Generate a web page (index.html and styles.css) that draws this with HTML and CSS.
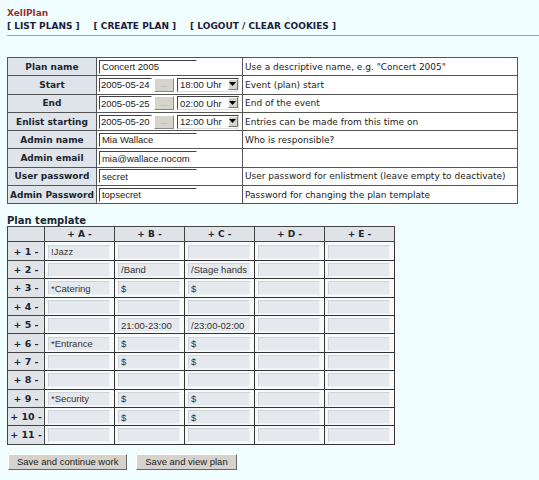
FILE: index.html
```html
<!DOCTYPE html>
<html lang="en">
<head>
    <meta charset="UTF-8">
    <title>XellPlan - Create plan</title>
    <link rel="stylesheet" href="styles.css">
</head>
<body>

<div class="title">XellPlan</div>
<div class="nav">
    <a href="#">[ LIST PLANS ]</a>
    <a href="#">[ CREATE PLAN ]</a>
    <a href="#">[ LOGOUT / CLEAR COOKIES ]</a>
</div>

<form>
<table class="props">
    <tr>
        <th>Plan name</th>
        <td><input type="text" class="txt" value="Concert 2005"></td>
        <td class="desc">Use a descriptive name, e.g. "Concert 2005"</td>
    </tr>
    <tr>
        <th>Start</th>
        <td>
            <input type="text" class="date" value="2005-05-24"><button type="button" class="dots">...</button><span class="sel"><select><option>18:00 Uhr</option></select><span class="arrow"><svg width="7" height="4" viewBox="0 0 7 4"><path d="M0 0h7L3.5 4z" fill="#000"/></svg></span></span>
        </td>
        <td class="desc">Event (plan) start</td>
    </tr>
    <tr>
        <th>End</th>
        <td>
            <input type="text" class="date" value="2005-05-25"><button type="button" class="dots">...</button><span class="sel"><select><option>02:00 Uhr</option></select><span class="arrow"><svg width="7" height="4" viewBox="0 0 7 4"><path d="M0 0h7L3.5 4z" fill="#000"/></svg></span></span>
        </td>
        <td class="desc">End of the event</td>
    </tr>
    <tr>
        <th>Enlist starting</th>
        <td>
            <input type="text" class="date" value="2005-05-20"><button type="button" class="dots">...</button><span class="sel"><select><option>12:00 Uhr</option></select><span class="arrow"><svg width="7" height="4" viewBox="0 0 7 4"><path d="M0 0h7L3.5 4z" fill="#000"/></svg></span></span>
        </td>
        <td class="desc">Entries can be made from this time on</td>
    </tr>
    <tr>
        <th>Admin name</th>
        <td><input type="text" class="txt" value="Mia Wallace"></td>
        <td class="desc">Who is responsible?</td>
    </tr>
    <tr>
        <th>Admin email</th>
        <td><input type="text" class="txt" value="mia@wallace.nocom"></td>
        <td class="desc"></td>
    </tr>
    <tr>
        <th>User password</th>
        <td><input type="text" class="txt" value="secret"></td>
        <td class="desc">User password for enlistment (leave empty to deactivate)</td>
    </tr>
    <tr>
        <th>Admin Password</th>
        <td><input type="text" class="txt" value="topsecret"></td>
        <td class="desc">Password for changing the plan template</td>
    </tr>
</table>

<h2>Plan template</h2>
<table class="grid" id="grid"></table>

<div class="buttons">
    <button type="button" class="btn">Save and continue work</button>
    <button type="button" class="btn">Save and view plan</button>
</div>
</form>

<script>
    // Template cells, row by row (columns A..E)
    const cells = [
        ['!Jazz', '', '', '', ''],
        ['', '/Band', '/Stage hands', '', ''],
        ['*Catering', '$', '$', '', ''],
        ['', '', '', '', ''],
        ['', '21:00-23:00', '/23:00-02:00', '', ''],
        ['*Entrance', '$', '$', '', ''],
        ['', '$', '$', '', ''],
        ['', '', '', '', ''],
        ['*Security', '$', '$', '', ''],
        ['', '$', '$', '', ''],
        ['', '', '', '', '']
    ];
    const cols = ['A', 'B', 'C', 'D', 'E'];

    let html = '<tr><th class="corner"></th>';
    cols.forEach(c => { html += `<th>+ ${c} -</th>`; });
    html += '</tr>';
    cells.forEach((row, i) => {
        html += `<tr><th class="rowhead">+ ${i + 1} -</th>`;
        row.forEach(v => { html += `<td><input type="text" value="${v}"></td>`; });
        html += '</tr>';
    });
    document.getElementById('grid').innerHTML = html;
</script>

</body>
</html>
```

FILE: styles.css
```css
body {
    font-family: "DejaVu Sans", Verdana, sans-serif;
    font-size: 9px;
    background-color: #f0feff;
    color: #222;
    margin: 0;
    padding: 8px 0 0 7px;
}
.title {
    color: #993333;
    font-weight: bold;
    font-size: 9px;
    line-height: 11px;
}
.nav {
    border-bottom: 1px solid #9a9ea2;
    padding: 2px 0 3px;
    line-height: 11px;
}
.nav a {
    color: #1c1c3a;
    font-weight: bold;
    text-decoration: none;
    margin-right: 11px;
}
/* Plan properties */
.props {
    border-collapse: collapse;
    margin-top: 21px;
    width: 511px;
    border: 1px solid #666;
}
.props th, .props td {
    border: 1px solid #555;
    height: 17.3px;
    padding: 0 2px;
}
.props th {
    width: 83px;
    background-color: #dfe4ea;
    color: #1c2430;
    font-weight: bold;
    white-space: nowrap;
    text-align: center;
}
.props td {
    background-color: #fff;
    white-space: nowrap;
}
.props td.desc {
    width: 270px;
    color: #222;
}
input, select, .btn {
    font-family: "Liberation Sans", Arial, sans-serif;
    font-size: 9.5px;
    color: #222;
    margin: 0;
    box-sizing: border-box;
}
.txt, .date {
    height: 14px;
    padding: 0 2px;
    border: 1px solid #fff;
    border-top-color: #444;
    border-left-color: #444;
    background: #fff;
    vertical-align: middle;
}
.txt {
    width: 98px;
}
.date {
    width: 53px;
    padding: 0 0 0 1px;
}
.dots {
    width: 20px;
    height: 14px;
    margin: 0 3px 0 2px;
    padding: 0;
    font-size: 8px;
    color: #999;
    background: #d6d3cc;
    border: 1px solid;
    border-color: #fff #888 #888 #fff;
    vertical-align: middle;
}
.sel {
    position: relative;
    display: inline-block;
    vertical-align: middle;
}
.sel select {
    display: block;
    width: 62px;
    height: 14px;
    padding: 0 0 0 2px;
    background: #fff;
    border: 1px solid;
    border-color: #444 #ddd #ddd #444;
    border-radius: 0;
    appearance: none;
    -webkit-appearance: none;
}
.sel .arrow {
    position: absolute;
    right: 1px;
    top: 1px;
    width: 10px;
    height: 11px;
    background: #d6d3cc;
    border: 1px solid;
    border-color: #fff #777 #777 #fff;
    box-sizing: border-box;
    display: flex;
    align-items: center;
    justify-content: center;
}
h2 {
    font-size: 10px;
    font-weight: bold;
    color: #1c2430;
    margin: 11px 0 0;
    line-height: 11px;
}
/* Template grid */
.grid {
    border-collapse: collapse;
    border: 1px solid #888;
}
.grid th {
    background-color: #dfe3e7;
    color: #1c2430;
    font-weight: bold;
    border: 1px solid #444;
    height: 14px;
    padding: 0;
    width: 69px;
    font-size: 9px;
}
.grid th.corner, .grid th.rowhead {
    width: 36px;
}
.grid th.rowhead {
    height: 17px;
    font-size: 9.5px;
    text-align: center;
}
.grid td {
    background-color: #f6fafb;
    border: 1px solid #333;
    padding: 2px 4px 1px 3px;
    height: 14.4px;
}
.grid td input {
    display: block;
    width: 62px;
    height: 14px;
    padding: 0 1px 0 2px;
    background: #e5e9ee;
    border: 1px solid;
    border-color: #cfd4d9 #f0f3f5 #f0f3f5 #cfd4d9;
    color: #333;
}
.buttons {
    margin-top: 9px;
}
.btn {
    height: 16px;
    padding: 0 8px;
    margin: 0 5px 0 1px;
    background: #d6d3cc;
    border: 1px solid;
    border-color: #fff #666 #666 #fff;
}
```
